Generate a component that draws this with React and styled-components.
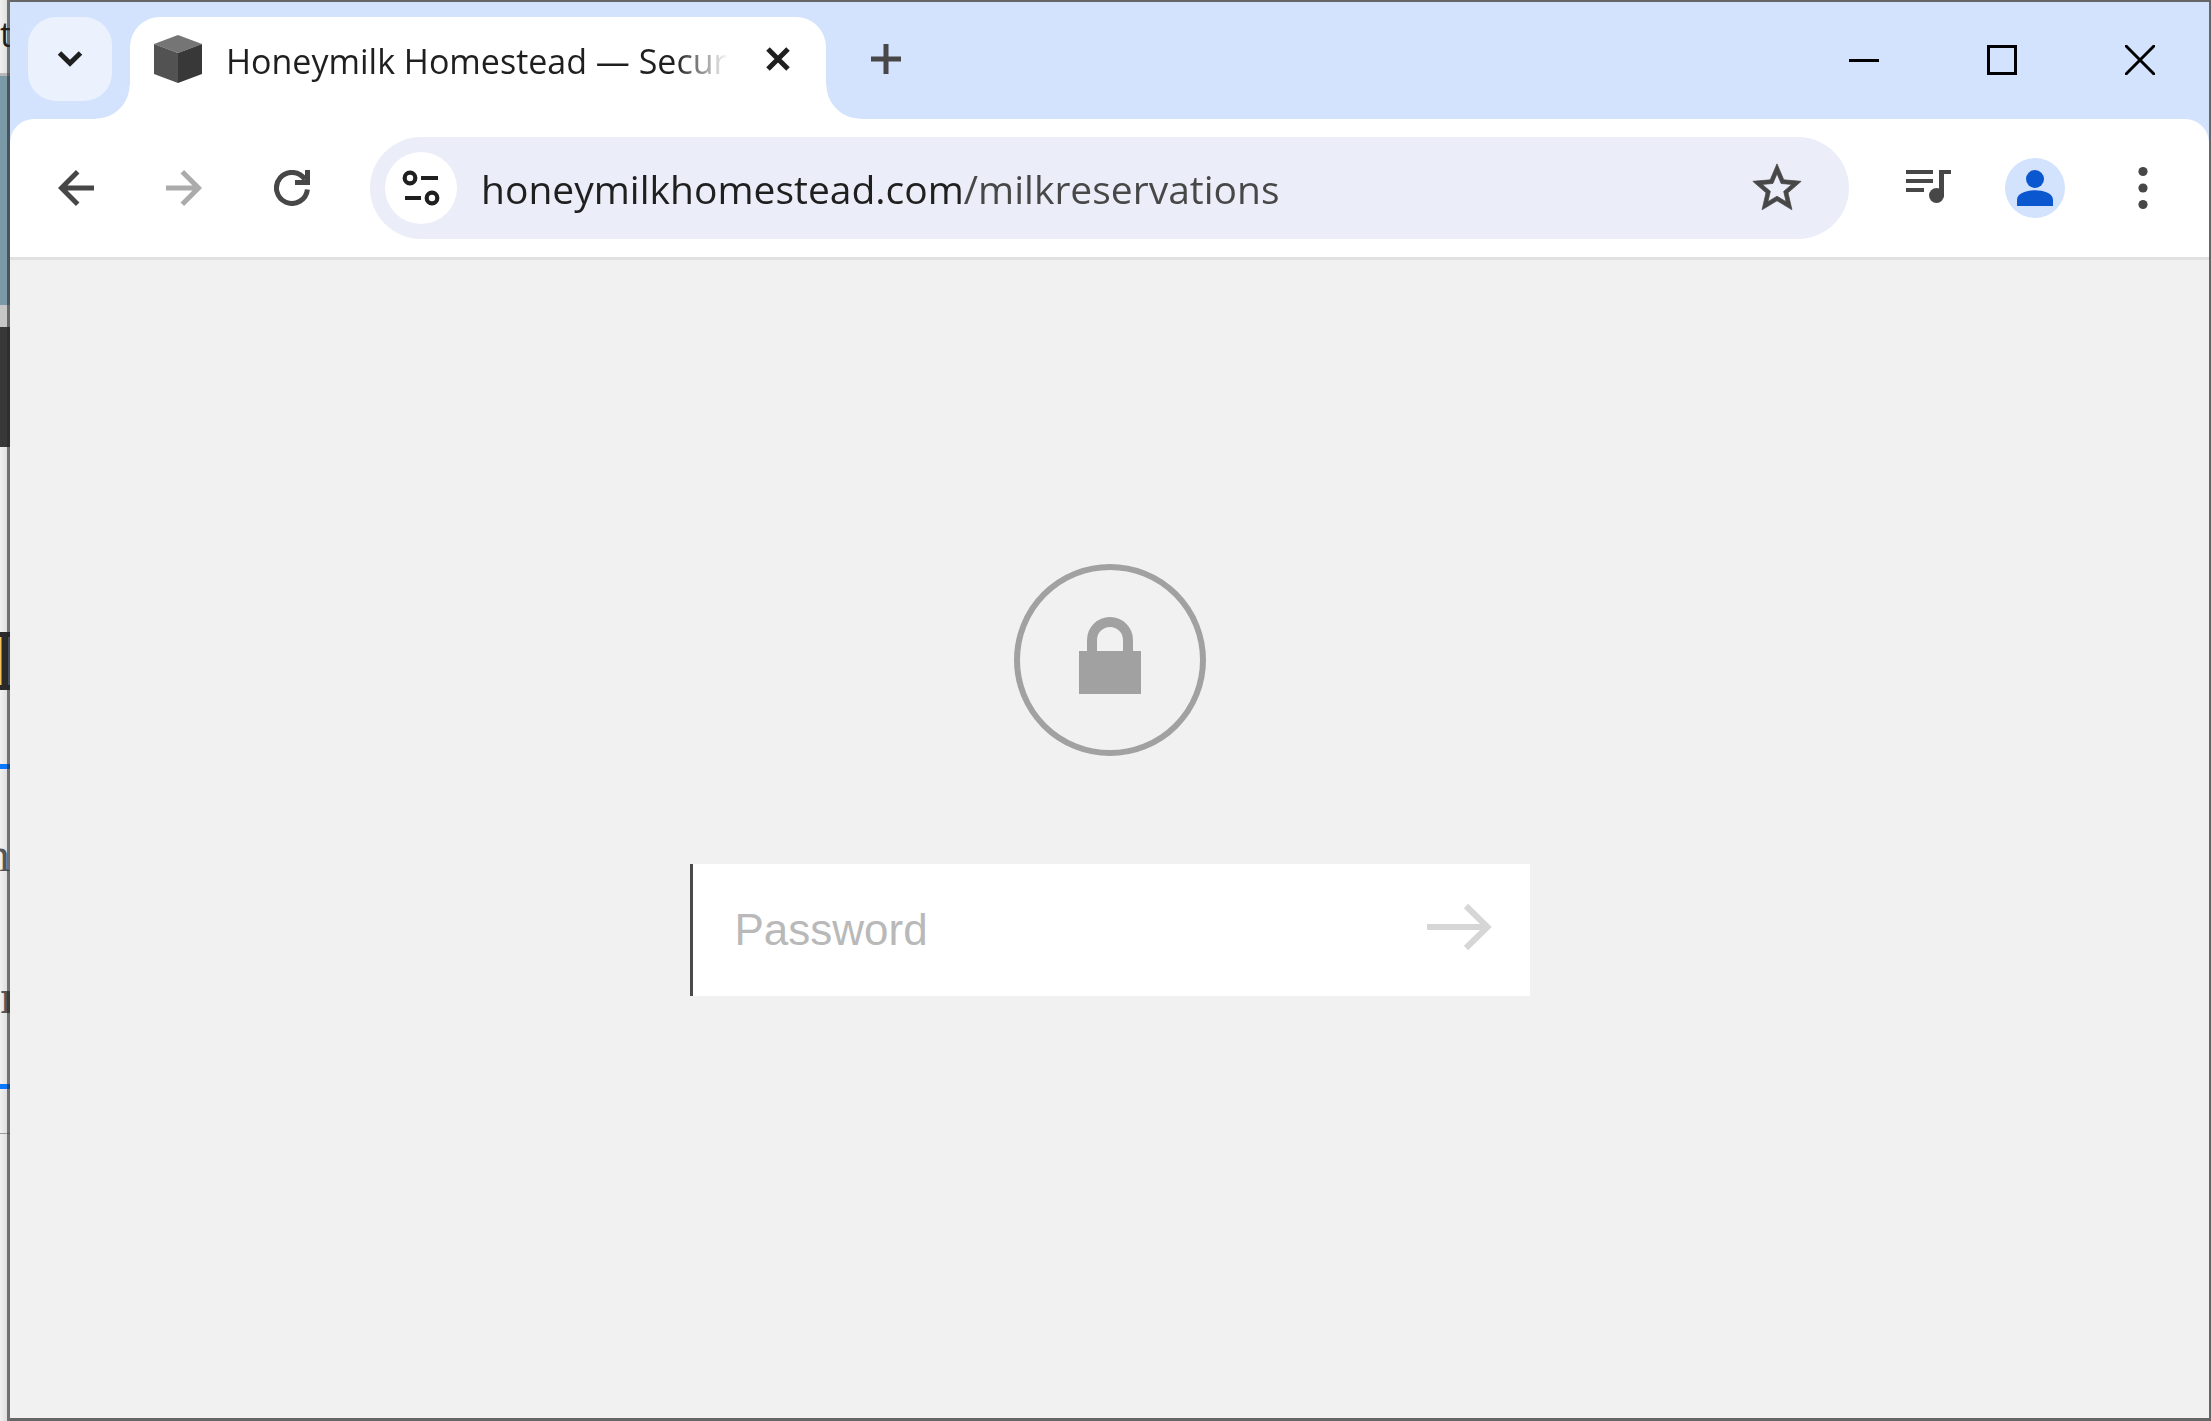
import React, { useState } from 'react'
import styled, { createGlobalStyle } from 'styled-components';

const GlobalStyle=createGlobalStyle`
  * {
    box-sizing:border-box;
  }
  body {
    margin:0;
    background:#f1f1f1;
    font-family:"Open Sans", "Noto Sans", sans-serif;
  }
  button {
    padding:0;
    border:none;
    background:transparent;
    cursor:pointer;
  }
  input {
    border:none;
    outline:none;
    padding:0;
    min-width:0;
  }
  svg {
    display:block;
    fill:none;
    flex:none;
  }
`

const Desktop=styled.div`
  display:flex;
  min-height:100vh;
`

/* the strip of the window behind, with the edge of the front window over it */
const BehindWindow=styled.div`
  position:relative;
  flex:none;
  display:flex;
  flex-direction:column;
  width:10px;
  overflow:hidden;
  background:linear-gradient(90deg, #f1f1f1, #d8d8d8);

  &::after {
    content:"";
    position:absolute;
    inset:0 0 0 7px;
    background:rgba(40,40,40,.6);
  }
`

const Slice=styled.div`
  flex:none;
  height:${props=>props.$height}px;
  background:${props=>props.$color || 'transparent'};
`

const Letter=styled(Slice)`
  display:flex;
  align-items:center;
  justify-content:${props=>props.$end ? 'flex-end' : 'flex-start'};
  color:${props=>props.$ink};
  font-family:${props=>props.$serif ? '"Liberation Serif", serif' : '"Open Sans", sans-serif'};
  font-size:${props=>props.$serif ? 48 : 34}px;
  font-weight:${props=>props.$bold ? 700 : 400};
`

const PhotoEdge=styled(Slice)`
  border:solid #2b2a2b;
  border-width:5px 0;
  background:linear-gradient(90deg, #f3c35c 1px, #2b2a2b 2px, #2b2a2b 8px, #6f8ca8 8px);
`

const Window=styled.div`
  flex:1;
  min-width:0;
  display:flex;
  flex-direction:column;
  border:solid #666;
  border-width:2px 2px 3px 0;
  background:#d3e3fd;
`

const TabStrip=styled.div`
  display:flex;
  height:117px;
  padding:15px 0 0 18px;
`

const StripButton=styled.button`
  display:flex;
  align-items:center;
  justify-content:center;
  flex:none;
  width:84px;
  height:84px;
  border-radius:28px;
  background:${props=>props.$filled ? '#ebf2fe' : 'transparent'};
`

const Tab=styled.div`
  position:relative;
  display:flex;
  align-items:center;
  flex:0 1 696px;
  min-width:0;
  margin:0 18px;
  padding:0 24px 18px;
  border-radius:30px 30px 0 0;
  background:#fff;

  &::before, &::after {
    content:"";
    position:absolute;
    bottom:0;
    width:34px;
    height:34px;
  }
  &::before {
    right:100%;
    background:radial-gradient(circle at 0 0, transparent 33px, #fff 34px);
  }
  &::after {
    left:100%;
    background:radial-gradient(circle at 100% 0, transparent 33px, #fff 34px);
  }
`

const TabTitle=styled.span`
  flex:1;
  overflow:hidden;
  margin:0 26px 0 24px;
  padding-top:4px;
  color:#1f1f1f;
  font-size:34px;
  line-height:48px;
  white-space:nowrap;
  mask-image:linear-gradient(90deg, #000 calc(100% - 52px), transparent);
`

const TabClose=styled.button`
  display:flex;
  align-items:center;
  justify-content:center;
  width:48px;
  height:48px;
`

const WindowControls=styled.div`
  display:flex;
  margin:-15px 0 0 auto;

  button {
    display:flex;
    align-items:center;
    justify-content:center;
    width:138px;
    height:116px;
  }
`

const Toolbar=styled.div`
  display:flex;
  align-items:center;
  gap:24px;
  padding:18px 24px;
  border-bottom:3px solid #e1e1e1;
  border-radius:24px 24px 0 0;
  background:#fff;
`

const ToolButton=styled.button`
  display:flex;
  align-items:center;
  justify-content:center;
  flex:none;
  width:84px;
  height:84px;
  color:#474747;

  &:disabled {
    color:#ababab;
  }
`

const AddressBar=styled.div`
  flex:1;
  min-width:0;
  display:flex;
  align-items:center;
  height:102px;
  margin:0 12px;
  padding:0 36px 0 15px;
  border-radius:51px;
  background:#ebeef8;

  button {
    display:flex;
    align-items:center;
    justify-content:center;
    flex:none;
    width:72px;
    height:72px;
    border-radius:50%;
  }
  .site {
    background:#fff;
  }
`

/* the host is darker than the path */
const Address=styled.input`
  flex:1;
  height:72px;
  margin:0 24px;
  font-family:inherit;
  font-size:39px;
  color:transparent;
  background:linear-gradient(90deg, #1f1f1f 484px, #474747 484px);
  background-clip:text;
  -webkit-background-clip:text;
`

const LockScreen=styled.main`
  flex:1;
  display:flex;
  flex-direction:column;
  align-items:center;
  justify-content:center;
  gap:108px;
  padding-bottom:118px;
  background:#f1f1f1;
`

const PasswordForm=styled.form`
  display:flex;
  width:840px;
  max-width:100%;
  height:132px;
  border-left:3px solid #4a4a4a;
  background:#fff;

  input {
    flex:1;
    padding-left:42px;
    background:transparent;
    color:#3b3b3b;
    font-family:"Liberation Sans", Arial, sans-serif;
    font-size:44px;
  }
  input::placeholder {
    color:#b9b9b9;
    opacity:1;
  }
  button {
    display:flex;
    align-items:center;
    padding:0 38px 6px;
  }
`

const CubeIcon=()=>(
  <svg width="48" height="48">
    <path d="M24 0L48 9L24 18L0 9Z" fill="#757575" />
    <path d="M0 9L24 18V48L0 39Z" fill="#525252" />
    <path d="M48 9L24 18V48L48 39Z" fill="#383838" />
  </svg>
)

const BackIcon=()=>(
  <svg width="36" height="36" stroke="currentColor" strokeWidth="5">
    <path d="M19.7 1.8L3.5 18L19.7 34.2M4 18H36" />
  </svg>
)

const ForwardIcon=()=>(
  <svg width="36" height="36" stroke="currentColor" strokeWidth="5">
    <path d="M16.3 1.8L32.5 18L16.3 34.2M32 18H0" />
  </svg>
)

const ReloadIcon=()=>(
  <svg width="36" height="36" stroke="currentColor" strokeWidth="5">
    <path d="M33.4 19.5A15.5 15.5 0 1 1 31 9.5" />
    <path d="M33.5 0V12.5H21" />
  </svg>
)

const TuneIcon=()=>(
  <svg width="48" height="48" stroke="#1f1f1f" strokeWidth="4.2">
    <circle cx="13" cy="14" r="5.3" />
    <circle cx="35" cy="34" r="5.3" />
    <path d="M24 14H41M8 34H24" />
  </svg>
)

const StarIcon=()=>(
  <svg width="58" height="58" viewBox="0 0 24 24">
    <path fill="#474747" stroke="#474747" strokeWidth=".3" d="M22 9.24l-7.19-.62L12 2 9.19 8.63 2 9.24l5.46 4.73L5.82 21 12 17.27 18.18 21l-1.63-7.03L22 9.24zM12 15.4l-3.76 2.27 1-4.28-3.32-2.88 4.38-.38L12 6.1l1.71 4.04 4.38.38-3.32 2.88 1 4.28L12 15.4z" />
  </svg>
)

const MediaIcon=()=>(
  <svg width="48" height="46" stroke="currentColor" strokeWidth="4">
    <path d="M3 7H30M3 16H30M3 25H21" />
    <path d="M38.5 32V5" strokeWidth="5" />
    <path d="M36 7H48" />
    <circle cx="33.5" cy="30.5" r="7.5" fill="currentColor" stroke="none" />
  </svg>
)

const ProfileIcon=()=>(
  <svg width="60" height="60">
    <circle cx="30" cy="30" r="30" fill="#d3e3fd" />
    <circle cx="30" cy="21" r="9" fill="#0b57d0" />
    <path d="M12 48V42C12 35 22 32.3 30 32.3S48 35 48 42V48Z" fill="#0b57d0" />
  </svg>
)

const MenuIcon=()=>(
  <svg width="10" height="44">
    <circle cx="5" cy="5.5" r="4.6" fill="currentColor" />
    <circle cx="5" cy="22" r="4.6" fill="currentColor" />
    <circle cx="5" cy="38.5" r="4.6" fill="currentColor" />
  </svg>
)

const LockIcon=()=>(
  <svg width="192" height="192">
    <circle cx="96" cy="96" r="93" stroke="#a1a1a1" strokeWidth="6" />
    <path d="M78 90V76A18 18 0 0 1 114 76V90" stroke="#a1a1a1" strokeWidth="10" />
    <path d="M65 87H127V130H65Z" fill="#a1a1a1" />
  </svg>
)

const Behind=()=>(
  <BehindWindow aria-hidden="true">
    <Letter $height={68} $ink="#1f1f1f">t</Letter>
    <Slice $height={5} />
    <Slice $height={3} $color="#b8b8b8" />
    <Slice $height={229} $color="#7b9aa7" />
    <Slice $height={22} $color="#c6c6c6" />
    <Slice $height={120} $color="#383838" />
    <Slice $height={185} />
    <PhotoEdge $height={58} />
    <Slice $height={74} />
    <Slice $height={5} $color="#0a78ff" />
    <Slice $height={60} />
    <Letter $height={50} $ink="#555" $serif $end>n</Letter>
    <Slice $height={92} />
    <Letter $height={50} $ink="#555" $serif $bold>r</Letter>
    <Slice $height={63} />
    <Slice $height={5} $color="#0a78ff" />
    <Slice $height={44} />
    <Slice $height={1} $color="#999" />
  </BehindWindow>
)

export default function App() {
  const [address, setAddress]=useState('honeymilkhomestead.com/milkreservations')
  const [password, setPassword]=useState('')

  return (
    <Desktop>
      <GlobalStyle />
      <Behind />
      <Window>
        <TabStrip>
          <StripButton $filled aria-label="Search tabs">
            <svg width="30" height="30" stroke="#1f1f1f" strokeWidth="5">
              <path d="M4.5 9L15 19.3L25.5 9" />
            </svg>
          </StripButton>
          <Tab>
            <CubeIcon />
            <TabTitle>Honeymilk Homestead — Secur</TabTitle>
            <TabClose aria-label="Close tab">
              <svg width="24" height="24" stroke="#1f1f1f" strokeWidth="5">
                <path d="M2 2L22 22M22 2L2 22" />
              </svg>
            </TabClose>
          </Tab>
          <StripButton aria-label="New tab">
            <svg width="30" height="30" stroke="#474747" strokeWidth="5">
              <path d="M15 0V30M0 15H30" />
            </svg>
          </StripButton>
          <WindowControls>
            <button aria-label="Minimize">
              <svg width="30" height="30" stroke="#000" strokeWidth="3">
                <path d="M0 15.5H30" />
              </svg>
            </button>
            <button aria-label="Maximize">
              <svg width="30" height="30" stroke="#000" strokeWidth="3">
                <path d="M1.5 1.5H28.5V28.5H1.5Z" />
              </svg>
            </button>
            <button aria-label="Close">
              <svg width="30" height="30" stroke="#000" strokeWidth="3">
                <path d="M0 0L30 30M30 0L0 30" />
              </svg>
            </button>
          </WindowControls>
        </TabStrip>

        <Toolbar>
          <ToolButton aria-label="Back"><BackIcon /></ToolButton>
          <ToolButton aria-label="Forward" disabled><ForwardIcon /></ToolButton>
          <ToolButton aria-label="Reload"><ReloadIcon /></ToolButton>
          <AddressBar>
            <button className="site" aria-label="View site information"><TuneIcon /></button>
            <Address
              type="text"
              aria-label="Address and search bar"
              spellCheck={false}
              value={address}
              onChange={e=>setAddress(e.target.value)}
            />
            <button aria-label="Bookmark this tab"><StarIcon /></button>
          </AddressBar>
          <ToolButton aria-label="Media controls"><MediaIcon /></ToolButton>
          <ToolButton aria-label="Profile"><ProfileIcon /></ToolButton>
          <ToolButton aria-label="Menu"><MenuIcon /></ToolButton>
        </Toolbar>

        <LockScreen>
          <LockIcon />
          <PasswordForm onSubmit={e=>e.preventDefault()}>
            <input
              type="password"
              aria-label="Password"
              placeholder="Password"
              value={password}
              onChange={e=>setPassword(e.target.value)}
            />
            <button type="submit" aria-label="Submit password">
              <svg width="65" height="48" stroke="#d6d6d6" strokeWidth="6">
                <path d="M0 24H60M39 3L60.5 24L39 45" />
              </svg>
            </button>
          </PasswordForm>
        </LockScreen>
      </Window>
    </Desktop>
  )
}
